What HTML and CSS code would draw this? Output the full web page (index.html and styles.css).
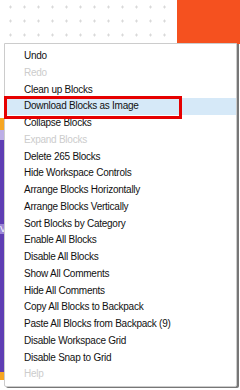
FILE: index.html
```html
<!DOCTYPE html>
<html lang="en">
<head>
    <meta charset="UTF-8">
    <title>Workspace menu</title>
    <link rel="stylesheet" href="styles.css">
</head>
<body>

    <div class="workspace">
        <!-- Grid of the workspace -->
        <svg class="grid" width="240" height="390">
            <defs>
                <pattern id="dots" x="3" y="0" width="14" height="14" patternUnits="userSpaceOnUse">
                    <path d="M6 7h3M7.5 5.5v3" stroke="#d9d9d9" stroke-width="1"/>
                </pattern>
            </defs>
            <rect width="240" height="390" fill="url(#dots)"/>
        </svg>

        <!-- Blocks peeking out behind the menu -->
        <div class="block block-top"></div>
        <div class="block-edge">
            <div class="edge-orange"></div>
            <div class="edge-light"></div>
            <div class="edge-purple">
                <div class="edge-label">V</div>
            </div>
            <div class="edge-orange small"></div>
        </div>

        <!-- Context menu -->
        <ul class="context-menu">
            <li>Undo</li>
            <li class="disabled">Redo</li>
            <li>Clean up Blocks</li>
            <li class="selected">Download Blocks as Image</li>
            <li>Collapse Blocks</li>
            <li class="disabled">Expand Blocks</li>
            <li>Delete 265 Blocks</li>
            <li>Hide Workspace Controls</li>
            <li>Arrange Blocks Horizontally</li>
            <li>Arrange Blocks Vertically</li>
            <li>Sort Blocks by Category</li>
            <li>Enable All Blocks</li>
            <li>Disable All Blocks</li>
            <li>Show All Comments</li>
            <li>Hide All Comments</li>
            <li>Copy All Blocks to Backpack</li>
            <li>Paste All Blocks from Backpack (9)</li>
            <li>Disable Workspace Grid</li>
            <li>Disable Snap to Grid</li>
            <li class="disabled">Help</li>
        </ul>
    </div>

</body>
</html>
```

FILE: styles.css
```css
/* Page */
body {
    margin: 0;
    font-family: 'Liberation Sans', Arial, sans-serif;
    background: #fff;
}

.workspace {
    position: relative;
    width: 240px;
    height: 390px;
    overflow: hidden;
}

.grid {
    position: absolute;
    left: 0;
    top: 0;
}

/* Blocks behind the menu */
.block-top {
    position: absolute;
    left: 177px;
    top: 0;
    width: 63px;
    height: 44px;
    background-color: #f5511f;
}

.block-edge {
    position: absolute;
    left: 0;
    top: 118px;
    width: 6px;
    display: flex;
    flex-direction: column;
}

.edge-orange {
    height: 12px;
    background-color: #f6a623;
}

.edge-orange.small {
    height: 8px;
}

.edge-light {
    height: 10px;
    background-color: #bcaee6;
}

.edge-purple {
    height: 232px;
    background-color: #5e3db3;
    padding-top: 84px;
    box-sizing: border-box;
}

.edge-label {
    height: 10px;
    background-color: #9b86d6;
    color: #fff;
    font-size: 9px;
    line-height: 10px;
}

/* Context menu */
.context-menu {
    position: absolute;
    left: 4px;
    top: 43px;
    width: 231px;
    margin: 0;
    padding: 4px 0 3px;
    list-style: none;
    background-color: #fff;
    border: 1px solid #ccc;
    border-radius: 0 0 2px 2px;
    box-shadow: 2px 1px 0 #777;
}

.context-menu li {
    height: 16.75px;
    line-height: 16.75px;
    padding-left: 19px;
    font-size: 10px;
    letter-spacing: -0.25px;
    color: #111;
    white-space: nowrap;
}

.context-menu li.disabled {
    color: #ccc;
}

.context-menu li.selected {
    background-color: #d6e9f8;
    position: relative;
}

/* Red frame drawn round the chosen entry */
.context-menu li.selected::after {
    content: "";
    position: absolute;
    left: -1px;
    top: -2px;
    width: 178px;
    height: 23px;
    border: 3px solid #e60000;
    box-sizing: border-box;
}
```
